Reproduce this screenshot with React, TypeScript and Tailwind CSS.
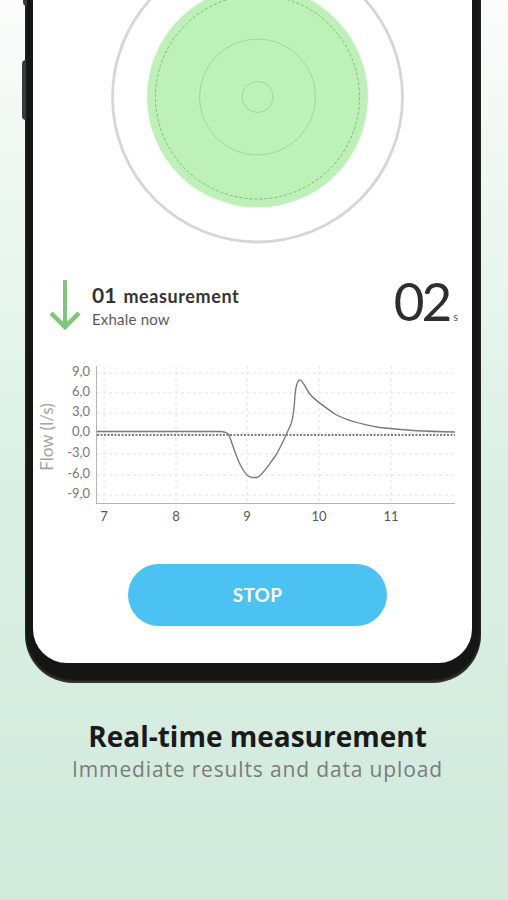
const yTicks = [
  { label: "9,0", y: 373 },
  { label: "6,0", y: 393 },
  { label: "3,0", y: 413 },
  { label: "0,0", y: 433 },
  { label: "-3,0", y: 454 },
  { label: "-6,0", y: 475 },
  { label: "-9,0", y: 495 },
];

const xTicks = [
  { label: "7", x: 104 },
  { label: "8", x: 176 },
  { label: "9", x: 247 },
  { label: "10", x: 319 },
  { label: "11", x: 391 },
];

const flowPath =
  "M96.7,431.5 L220,431.5 C224,431.5 227,432 229,435 C232,442 236,458 242,468 C246,475 249,477.5 252,477.5 L257,477.5 C262,476 268,466 276,455 C282,445 287,433 291,424 C293,419 294,412 295,395 C296,385 298,380 300,380 C302,380 305,386 309,393 C313,399 322,405 335,414 C345,420 360,424 380,427.5 C400,430 430,431.5 455,432";

function Target() {
  return (
    <svg className="block h-[262px] w-full" viewBox="33 0 439 262">
      <circle cx="257.5" cy="97" r="145" fill="none" stroke="#d6d6d6" strokeWidth="2.8" />
      <circle cx="257.5" cy="97" r="110.5" fill="#bdf1b8" />
      <circle cx="257.5" cy="97" r="102" fill="none" stroke="#7fae7b" strokeWidth="0.9" strokeDasharray="3 2" />
      <circle cx="257.5" cy="97" r="58" fill="none" stroke="#a3d49e" strokeWidth="1" />
      <circle cx="257.5" cy="97" r="15.5" fill="none" stroke="#a3d49e" strokeWidth="1" />
    </svg>
  );
}

function FlowChart() {
  return (
    <svg className="mt-[26px] block h-[175px] w-full" viewBox="33 360 439 175" style={{ fontFamily: "Lato, sans-serif" }}>
      {yTicks.map((t) => (
        <line key={t.label} x1="97" x2="455" y1={t.y} y2={t.y} stroke="#e2e2e2" strokeWidth="1" strokeDasharray="3 3" />
      ))}
      {xTicks.map((t) => (
        <line key={t.label} x1={t.x} x2={t.x} y1="366" y2="503" stroke="#e2e2e2" strokeWidth="1" strokeDasharray="3 3" />
      ))}
      <line x1="96.5" x2="96.5" y1="366" y2="503.5" stroke="#b5b5b5" strokeWidth="1" />
      <line x1="96" x2="455" y1="503.5" y2="503.5" stroke="#b5b5b5" strokeWidth="1" />
      <line x1="97" x2="455" y1="435" y2="435" stroke="#555" strokeWidth="1.3" strokeDasharray="2 1.5" />
      <path d={flowPath} fill="none" stroke="#7a7a7a" strokeWidth="1.4" />
      {yTicks.map((t) => (
        <text key={t.label} x="90" y={t.y} textAnchor="end" dominantBaseline="middle" fontSize="13" fill="#777">
          {t.label}
        </text>
      ))}
      {xTicks.map((t) => (
        <text key={t.label} x={t.x} y="518" textAnchor="middle" dominantBaseline="middle" fontSize="13" fill="#555">
          {t.label}
        </text>
      ))}
      <text
        x="49"
        y="437"
        transform="rotate(-90 49 437)"
        textAnchor="middle"
        dominantBaseline="middle"
        fontSize="17"
        fill="#a5a5a5"
      >
        Flow (l/s)
      </text>
    </svg>
  );
}

export default function App() {
  return (
    <div
      className="min-h-[900px] w-[508px] overflow-hidden bg-gradient-to-b from-[#fbfcfb] via-[#dcf1e6] to-[#d1eadc]"
      style={{ fontFamily: "Lato, 'Open Sans', sans-serif" }}
    >
      {/* phone */}
      <div className="relative ml-[25px] w-[456px] rounded-b-[48px] bg-[#151515] pb-[20px] pl-[8px] pr-[9px] shadow-[inset_0_-2px_3px_rgba(255,255,255,0.18)]">
        <div className="absolute -left-[3px] top-[60px] h-[60px] w-[4px] rounded-l-sm bg-[#3a3a3a]" />
        <div className="absolute -left-[2px] top-0 h-[6px] w-[4px] rounded-bl-sm bg-[#3a3a3a]" />
        <div className="flex h-[663px] flex-col rounded-b-[34px] bg-white">
          <Target />

          <div className="mt-[16px] flex h-[56px] items-start pl-[17px] pr-[14px]">
            <svg className="mt-[2px] h-[52px] w-[32px] shrink-0" viewBox="0 0 32 52">
              <line x1="15" y1="0" x2="15" y2="47" stroke="#7ec77a" strokeWidth="4" />
              <polyline points="1,33 15,47 29,33" fill="none" stroke="#7ec77a" strokeWidth="4.5" />
            </svg>
            <div className="ml-[10px] mt-[4px] flex flex-col">
              <div className="flex items-baseline leading-[26px] text-[#333]">
                <span className="text-[21px] font-bold">01</span>
                <span className="ml-[7px] text-[18px] font-bold tracking-[0.6px]">measurement</span>
              </div>
              <span className="text-[15px] leading-[20px] tracking-[0.2px] text-[#5a5a5a]">Exhale now</span>
            </div>
            <div className="ml-auto mt-[-4px] flex items-baseline text-[#2e2e2e]">
              <span className="text-[53px] font-normal leading-[54px] tracking-[-3px]">02</span>
              <span className="ml-[4px] text-[11px] leading-none text-[#555]">s</span>
            </div>
          </div>

          <FlowChart />

          <button className="mx-auto mt-[29px] flex h-[62px] w-[259px] translate-x-[5px] items-center justify-center rounded-full bg-[#4bc2f2] text-[19px] font-bold tracking-[0.3px] text-white">
            STOP
          </button>
        </div>
      </div>

      {/* caption */}
      <div className="flex flex-col items-center pl-[7px]" style={{ fontFamily: "'Open Sans', Lato, sans-serif" }}>
        <h1 className="mt-[35px] text-[28px] font-bold leading-[36px] tracking-[0px] text-[#1a1a1a]">Real-time measurement</h1>
        <p className="mt-[1px] text-[21px] leading-[28px] tracking-[0.85px] text-[#7b7b7b]">Immediate results and data upload</p>
      </div>
    </div>
  );
}
